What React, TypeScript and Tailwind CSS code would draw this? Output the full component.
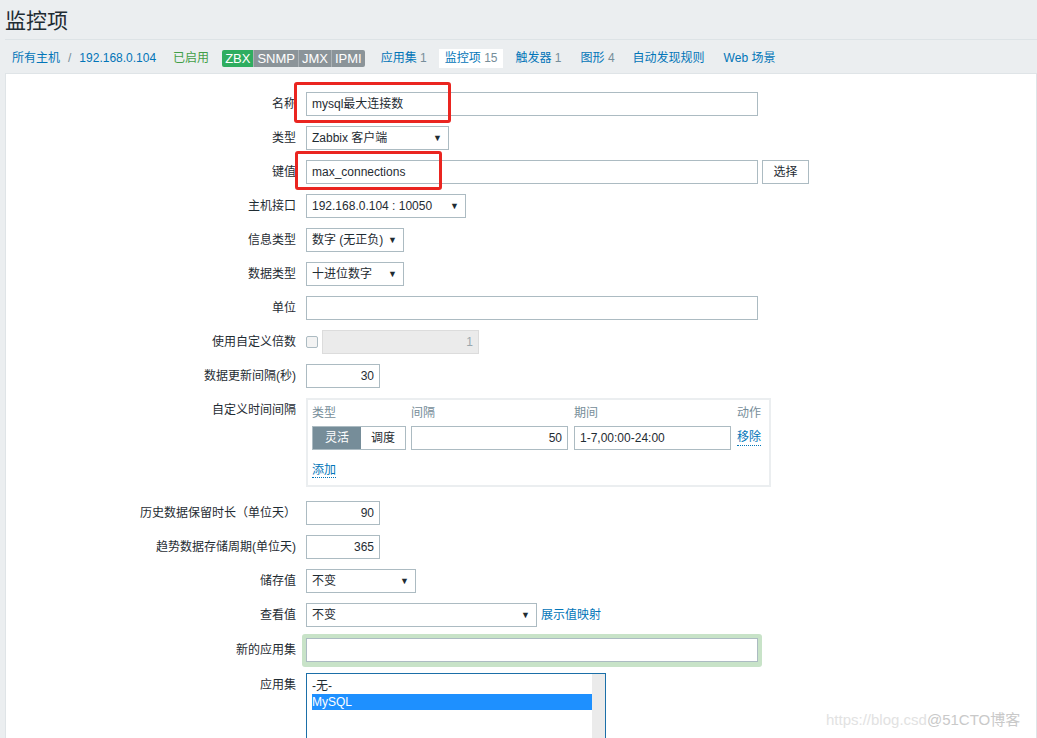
import type { ReactNode } from 'react'

const inputBase = 'h-[24px] border border-[#acbbc2] bg-white px-[5px] text-[12px] text-[#1f2c33] leading-[22px]'

function Field({ label, children, alignTop = false }: { label: string; children: ReactNode; alignTop?: boolean }) {
  return (
    <div className="flex">
      <div
        className={
          'w-[290px] shrink-0 text-right text-[12px] text-[#1f2c33] ' +
          (alignTop ? 'pt-[5px] leading-[14px]' : 'leading-[25px] h-[24px]')
        }
      >
        {label}
      </div>
      <div className="ml-[10px] flex items-start">{children}</div>
    </div>
  )
}

function TextInput({ width, value = '', right = false }: { width: string; value?: string; right?: boolean }) {
  return <div className={`${inputBase} ${width} ${right ? 'text-right' : ''}`}>{value}</div>
}

function Select({ width, value }: { width: string; value: string }) {
  return (
    <div className={`${inputBase} ${width} flex items-center justify-between pr-[6px]`}>
      <span>{value}</span>
      <span className="text-[9px] text-[#1f2c33]">▼</span>
    </div>
  )
}

function NavLink({ label, count }: { label: string; count?: number }) {
  return (
    <span className="text-[#0275b8]">
      {label}
      {count !== undefined && <span className="text-[#768d99]"> {count}</span>}
    </span>
  )
}

export default function App() {
  return (
    <div className="relative min-h-[738px] w-[1037px] overflow-hidden bg-[#ebeef0] font-['Liberation_Sans','Noto_Sans_CJK_SC',sans-serif] text-[12px] text-[#1f2c33]">
      {/* Title */}
      <div className="pl-[5px] pt-[7px] h-[39px] text-[21px] leading-[28px] text-[#1f2c33]">监控项</div>
      <div className="ml-[5px] h-px bg-[#dde3e6]" />

      {/* Host navigation */}
      <div className="flex h-[33px] items-center pl-[12px] pt-[3px]">
        <span className="text-[#0275b8]">所有主机</span>
        <span className="ml-[8px] text-[#768d99]">/</span>
        <span className="ml-[8px] text-[#0275b8]">192.168.0.104</span>
        <span className="ml-[17px] text-[#429e47]">已启用</span>
        <div className="ml-[13px] flex h-[17px] overflow-hidden rounded-[2px] text-[13px] leading-[17px] text-white">
          <span className="bg-[#2fad60] px-[3px]">ZBX</span>
          <span className="border-l border-[#aab1b5] bg-[#8b9499] px-[3px]">SNMP</span>
          <span className="border-l border-[#aab1b5] bg-[#8b9499] px-[3px]">JMX</span>
          <span className="border-l border-[#aab1b5] bg-[#8b9499] px-[3px]">IPMI</span>
        </div>
        <span className="ml-[16px]">
          <NavLink label="应用集" count={1} />
        </span>
        <span className="ml-[12px] flex h-[19px] items-center bg-white px-[6px]">
          <NavLink label="监控项" count={15} />
        </span>
        <span className="ml-[12px]">
          <NavLink label="触发器" count={1} />
        </span>
        <span className="ml-[19px]">
          <NavLink label="图形" count={4} />
        </span>
        <span className="ml-[18px]">
          <NavLink label="自动发现规则" />
        </span>
        <span className="ml-[19px]">
          <NavLink label="Web 场景" />
        </span>
      </div>

      {/* Form panel */}
      <div className="ml-[5px] min-h-[680px] border border-[#dfe4e7] bg-white pt-[18px]">
        <div className="flex flex-col gap-[10px]">
          <Field label="名称">
            <TextInput width="w-[452px]" value="mysql最大连接数" />
          </Field>
          <Field label="类型">
            <Select width="w-[143px]" value="Zabbix 客户端" />
          </Field>
          <Field label="键值">
            <TextInput width="w-[452px]" value="max_connections" />
            <button className="ml-[4px] h-[24px] w-[47px] border border-[#acbbc2] bg-white text-[12px] text-[#1f2c33]">
              选择
            </button>
          </Field>
          <Field label="主机接口">
            <Select width="w-[160px]" value="192.168.0.104 : 10050" />
          </Field>
          <Field label="信息类型">
            <Select width="w-[98px]" value="数字 (无正负)" />
          </Field>
          <Field label="数据类型">
            <Select width="w-[98px]" value="十进位数字" />
          </Field>
          <Field label="单位">
            <TextInput width="w-[452px]" />
          </Field>
          <Field label="使用自定义倍数">
            <div className="flex h-[24px] items-center">
              <div className="h-[12px] w-[12px] rounded-[2px] border border-[#acbbc2] bg-[#f3f3f3]" />
              <div className="ml-[4px] h-[24px] w-[157px] border border-[#dcdcdc] bg-[#ebebeb] px-[5px] text-right leading-[22px] text-[#9aa7ae]">
                1
              </div>
            </div>
          </Field>
          <Field label="数据更新间隔(秒)">
            <TextInput width="w-[74px]" value="30" right />
          </Field>
          <Field label="自定义时间间隔" alignTop>
            <div className="h-[89px] w-[465px] border-2 border-[#ebeef0] px-[4px] pt-[5px]">
              <div className="flex text-[#768d99] leading-[16px]">
                <span className="w-[99px]">类型</span>
                <span className="w-[163px]">间隔</span>
                <span className="w-[163px]">期间</span>
                <span>动作</span>
              </div>
              <div className="mt-[5px] flex items-center">
                <div className="flex h-[24px] w-[94px] border border-[#acbbc2]">
                  <span className="flex w-[48px] items-center justify-center bg-[#768d99] text-white">灵活</span>
                  <span className="flex flex-1 items-center justify-center bg-white text-[#1f2c33]">调度</span>
                </div>
                <div className="ml-[5px]">
                  <TextInput width="w-[157px]" value="50" right />
                </div>
                <div className="ml-[6px]">
                  <TextInput width="w-[157px]" value="1-7,00:00-24:00" />
                </div>
                <span className="ml-[6px] border-b border-dotted border-[#0275b8] leading-[15px] text-[#0275b8]">移除</span>
              </div>
              <div className="mt-[11px]">
                <span className="border-b border-dotted border-[#0275b8] leading-[15px] text-[#0275b8]">添加</span>
              </div>
            </div>
          </Field>
          <div className="mt-[4px]">
            <Field label="历史数据保留时长（单位天）">
              <TextInput width="w-[74px]" value="90" right />
            </Field>
          </div>
          <Field label="趋势数据存储周期(单位天)">
            <TextInput width="w-[74px]" value="365" right />
          </Field>
          <Field label="储存值">
            <Select width="w-[110px]" value="不变" />
          </Field>
          <Field label="查看值">
            <Select width="w-[231px]" value="不变" />
            <span className="ml-[4px] leading-[25px] text-[#0275b8]">展示值映射</span>
          </Field>
          <div className="flex">
            <div className="w-[290px] shrink-0 text-right leading-[25px]">新的应用集</div>
            <div className="ml-[6px] -my-[4px] rounded-[3px] bg-[#c8e3c8] p-[4px]">
              <TextInput width="w-[452px]" />
            </div>
          </div>
          <Field label="应用集" alignTop>
            <div className="flex h-[80px] w-[300px] border border-[#1b6fa8] bg-white">
              <div className="flex-1 pl-[5px] pt-[5px] leading-[14px]">
                <div className="text-[#1f2c33]">-无-</div>
                <div className="mt-[1px] bg-[#1e90ff] leading-[16px] text-white">MySQL</div>
              </div>
              <div className="w-[13px] bg-[#ebebeb]" />
            </div>
          </Field>
        </div>
      </div>

      {/* Annotation boxes */}
      <div className="absolute left-[294px] top-[82px] h-[41px] w-[157px] rounded-[3px] border-[3px] border-[#ea2520]" />
      <div className="absolute left-[295px] top-[151px] h-[39px] w-[147px] rounded-[3px] border-[3px] border-[#ea2520]" />

      {/* Watermark */}
      <div className="absolute left-[826px] top-[710px] text-[15px] leading-[20px]">
        <span className="text-[#e2e2e2]">https://blog.csd</span>
        <span className="text-[#c9c9c9]">@51CTO博客</span>
      </div>
    </div>
  )
}
